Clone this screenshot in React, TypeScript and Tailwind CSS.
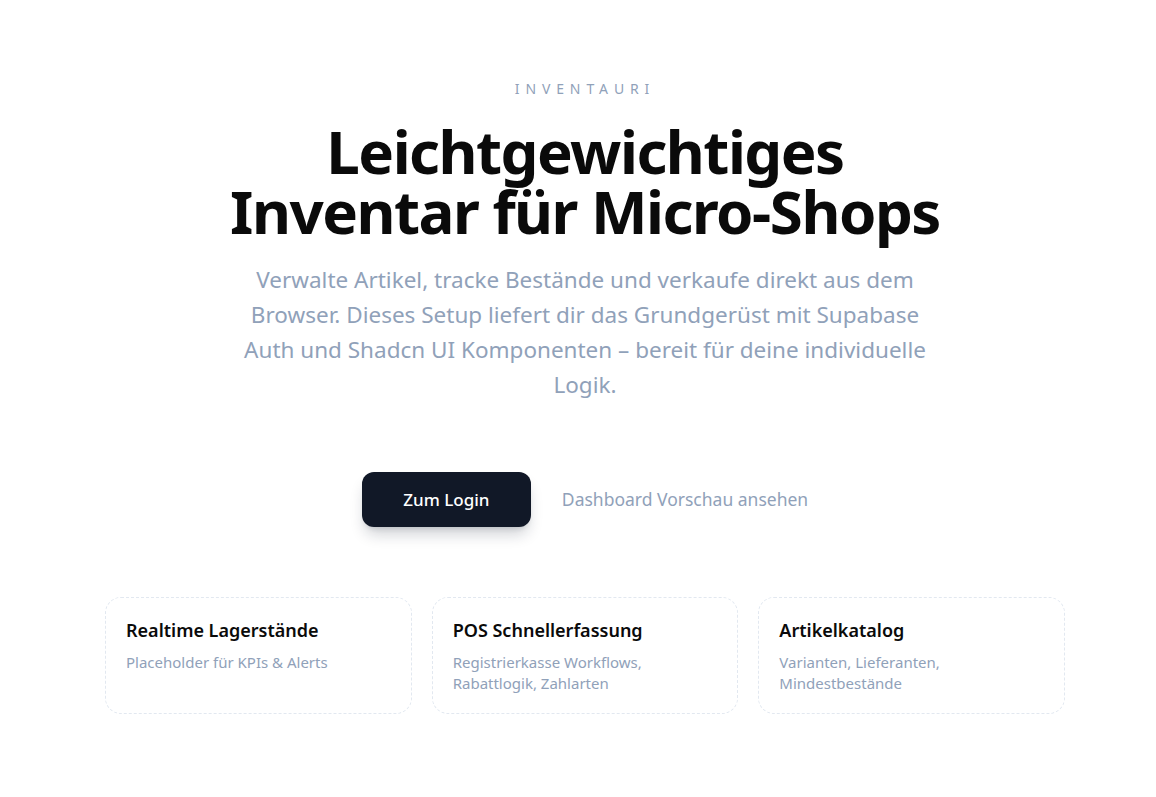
const features = [
  { title: "Realtime Lagerstände", text: "Placeholder für KPIs & Alerts" },
  { title: "POS Schnellerfassung", text: "Registrierkasse Workflows, Rabattlogik, Zahlarten" },
  { title: "Artikelkatalog", text: "Varianten, Lieferanten, Mindestbestände" },
];

export default function App() {
  return (
    <main className="min-h-screen bg-white pl-[14px] font-['Noto_Sans',sans-serif] text-neutral-950">
      <section className="mx-auto flex max-w-[960px] flex-col items-center pt-[79px] text-center">
        <p className="text-sm tracking-[0.42em] text-slate-400 uppercase">Inventauri</p>
        <h1 className="mt-[22px] text-[60px] leading-[60px] font-bold tracking-tight text-neutral-950">
          Leichtgewichtiges
          <br />
          Inventar für Micro-Shops
        </h1>
        <p className="mt-[21px] max-w-[700px] text-[22.5px] leading-[35px] text-slate-400">
          Verwalte Artikel, tracke Bestände und verkaufe direkt aus dem Browser. Dieses Setup
          liefert dir das Grundgerüst mit Supabase Auth und Shadcn UI Komponenten – bereit für
          deine individuelle Logik.
        </p>

        <div className="mt-[70px] flex items-center gap-[31px]">
          <button className="h-[55px] w-[169px] rounded-xl bg-[#111827] text-[17px] font-medium text-white shadow-lg shadow-slate-900/20">
            Zum Login
          </button>
          <a href="#" className="text-[17.5px] text-slate-400">
            Dashboard Vorschau ansehen
          </a>
        </div>

        <div className="mt-[70px] grid w-full grid-cols-3 gap-5 text-left">
          {features.map((f) => (
            <div
              key={f.title}
              className="h-[117px] rounded-2xl border border-dashed border-slate-200 px-5 pt-[19px]"
            >
              <h3 className="text-lg leading-[26px] font-semibold text-neutral-950">{f.title}</h3>
              <p className="mt-[9px] text-[15px] leading-[21px] text-slate-400">{f.text}</p>
            </div>
          ))}
        </div>
      </section>
    </main>
  );
}
